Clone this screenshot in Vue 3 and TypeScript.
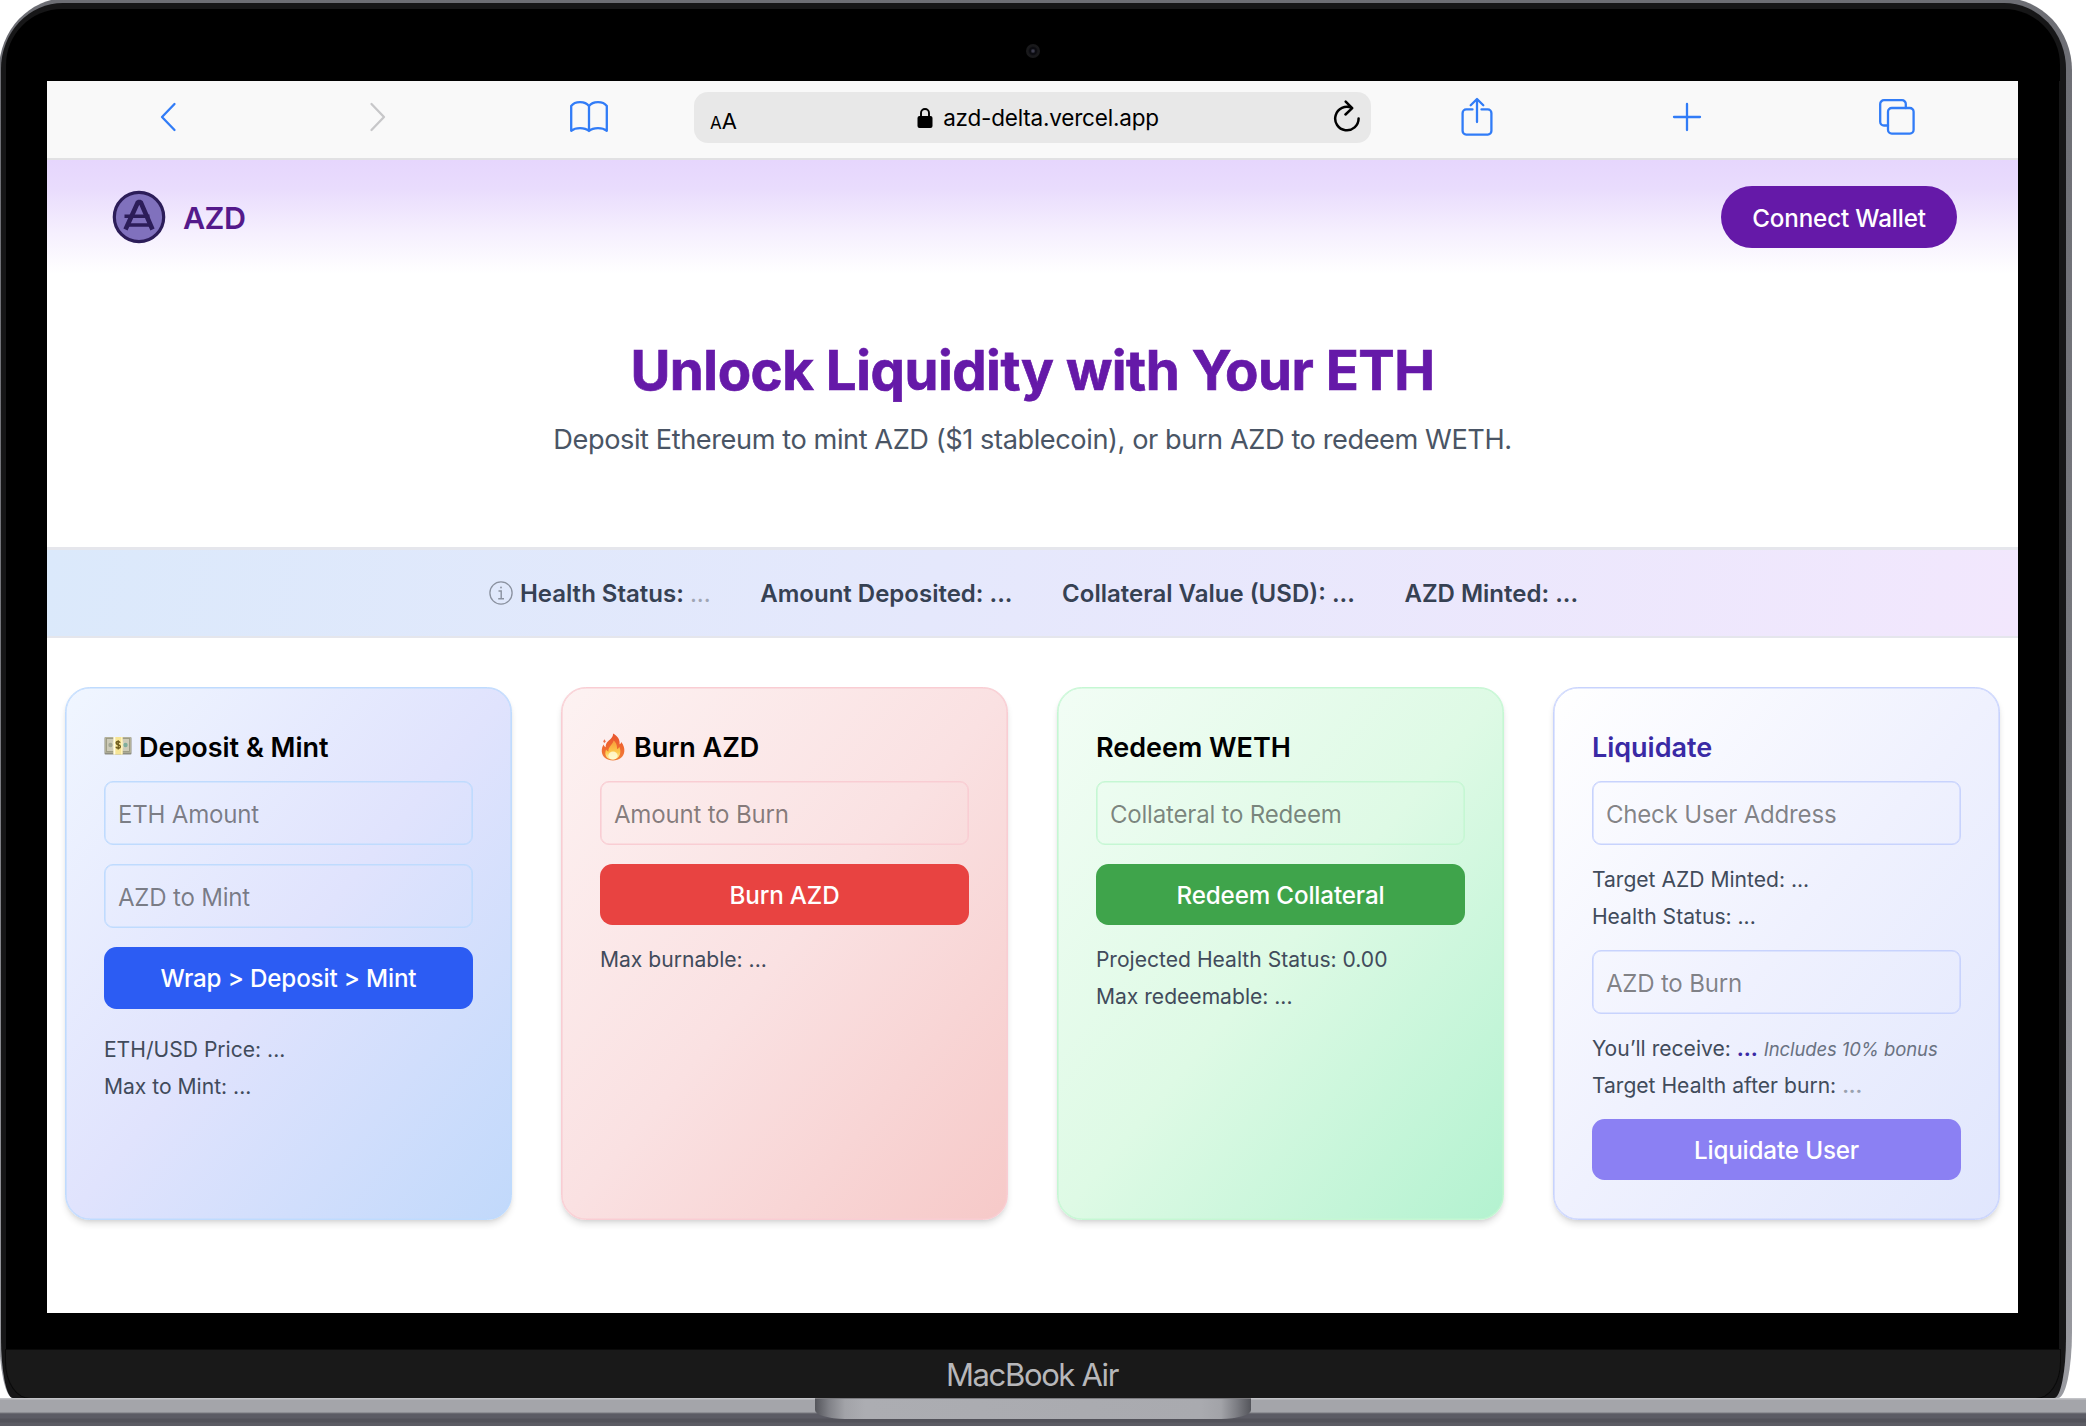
<script setup lang="ts">
interface Stat {
  label: string
  info?: boolean
  muted?: boolean
}

const stats: Stat[] = [
  { label: 'Health Status:', info: true, muted: true },
  { label: 'Amount Deposited:' },
  { label: 'Collateral Value (USD):' },
  { label: 'AZD Minted:' },
]
</script>

<template>
  <div class="stage">
    <div class="lid">
      <div class="glass">
        <div class="bezel-top">
          <span class="camera"></span>
        </div>

        <div class="screen">
          <nav class="toolbar">
            <div class="side side-left">
              <svg class="back" width="18" height="32" viewBox="0 0 18 32"><path d="M15.5 3 3 16l12.5 13" /></svg>
              <svg class="forward" width="18" height="32" viewBox="0 0 18 32"><path d="M2.500 3 15 16 2.500 29" /></svg>
              <svg class="book" width="40" height="34" viewBox="0 0 40 34">
                <path d="M20 6.200C18 3.400 14.800 2.200 11 2.200S4 3.600 2.200 6v24.800c2.300-1.900 5.300-2.700 8.800-2.700s6.900 1 9 2.900c2.100-1.900 5.500-2.900 9-2.900s6.500.8 8.800 2.700V6C36 3.600 32.800 2.200 29 2.200S22 3.400 20 6.200ZM20 6.200V31" />
              </svg>
            </div>
            <div class="address">
              <span class="reader"><small>A</small>A</span>
              <span class="url">
                <svg width="16" height="21" viewBox="0 0 16 21">
                  <path d="M4 10V6a4 4 0 0 1 8 0v4" fill="none" stroke="#000" stroke-width="1.900" />
                  <rect x=".5" y="9" width="15" height="12" rx="2" fill="#000" />
                </svg>
                <span>azd-delta.vercel.app</span>
              </span>
              <svg class="reload" width="28" height="33" viewBox="0 0 28 33">
                <path d="M25.600 18.500A11.700 11.700 0 1 1 18.700 7.900M12.700 1.600l6.500 6.500-6.700 6.400" />
              </svg>
            </div>
            <div class="side side-right">
              <svg width="32" height="40" viewBox="0 0 32 40">
                <path d="M11.500 12.400H5.200a3.600 3.600 0 0 0-3.600 3.600v18a3.600 3.600 0 0 0 3.600 3.600h21.600a3.600 3.600 0 0 0 3.600-3.600V16a3.600 3.600 0 0 0-3.600-3.600h-6.300M16 25V2.300M9.700 8.300 16 2l6.300 6.300" />
              </svg>
              <svg class="plus" width="32" height="32" viewBox="0 0 32 32"><path d="M16 3v26M3 16h26" /></svg>
              <svg width="38" height="38" viewBox="0 0 38 38">
                <path d="M10 27.500H6a3.800 3.800 0 0 1-3.800-3.800V6A3.800 3.800 0 0 1 6 2.200h18A3.800 3.800 0 0 1 27.800 6v4" />
                <rect x="10" y="10" width="25.600" height="25.600" rx="3.800" />
              </svg>
            </div>
          </nav>

          <header class="site-header">
            <div class="brand">
              <svg width="54" height="54" viewBox="0 0 54 54">
                <circle cx="27" cy="27" r="24.700" fill="#8071bd" stroke="#2c1d59" stroke-width="3.200" />
                <path d="M13.500 39.500 26 12h2.600L40.500 39.500" fill="none" stroke="#2c1d59" stroke-width="4.600" stroke-linejoin="bevel" />
                <path d="M12.500 26.300H37.500M16 35H39" stroke="#2c1d59" stroke-width="3.600" />
              </svg>
              <span>AZD</span>
            </div>
            <button class="connect">Connect Wallet</button>
          </header>

          <section class="hero">
            <h1>Unlock Liquidity with Your ETH</h1>
            <p>Deposit Ethereum to mint AZD ($1 stablecoin), or burn AZD to redeem WETH.</p>
          </section>

          <section class="stats">
            <div v-for="stat in stats" :key="stat.label" class="stat">
              <svg v-if="stat.info" width="24" height="24" viewBox="0 0 24 24" fill="none" stroke="#8a919f">
                <circle cx="12" cy="12" r="11.100" stroke-width="1.300" />
                <path d="M9.500 10h2.700v7.500M9.200 17.700h5.800" stroke-width="1.400" />
                <circle cx="12" cy="6.500" r=".9" fill="#8a919f" stroke="none" />
              </svg>
              <span>{{ stat.label }} <span :class="{ muted: stat.muted }">...</span></span>
            </div>
          </section>

          <main class="cards">
            <article class="card blue">
              <h2>
                <svg class="money" width="28" height="20" viewBox="0 0 28 20">
                  <rect x=".5" y="1" width="27" height="17.500" rx="1" fill="#8f8f82" />
                  <rect x="1" y="1" width="26" height="15.800" fill="#b4b29b" />
                  <rect x="2.500" y="2.500" width="23" height="13" fill="#cdcbb8" stroke="#96957f" stroke-width=".8" />
                  <circle cx="14" cy="9" r="6" fill="#dfdecb" />
                  <circle cx="6.500" cy="9" r="2.200" fill="#a3a896" />
                  <circle cx="21.500" cy="9" r="2.200" fill="#7fae9c" />
                  <rect x="9.500" y="1" width="9" height="17.500" fill="#f6e596" />
                  <rect x="9.500" y="1" width="1.800" height="17.500" fill="#fffbe6" />
                  <rect x="17" y="1" width="1.500" height="17.500" fill="#fff3bd" />
                  <path d="M16.200 6.700c-.4-.9-1.200-1.200-2.100-1.200-1.200 0-2 .6-2 1.600 0 2.300 4.300 1 4.300 3.400 0 1.100-.9 1.700-2.200 1.700-1.100 0-2-.5-2.300-1.400M14.200 4.200v9.400" fill="none" stroke="#6d5a1c" stroke-width="1.300" />
                </svg>
                <span>Deposit &amp; Mint</span>
              </h2>
              <input placeholder="ETH Amount" />
              <input placeholder="AZD to Mint" />
              <button>Wrap &gt; Deposit &gt; Mint</button>
              <div class="notes spaced">
                <p>ETH/USD Price: ...</p>
                <p>Max to Mint: ...</p>
              </div>
            </article>

            <article class="card red">
              <h2>
                <svg class="fire" width="24" height="28" viewBox="0 0 24 28">
                  <defs>
                    <linearGradient id="flame" x1="0" y1="0" x2="0" y2="1">
                      <stop offset="0" stop-color="#e8552f" />
                      <stop offset=".55" stop-color="#f0692f" />
                      <stop offset="1" stop-color="#f0803a" />
                    </linearGradient>
                    <linearGradient id="ember" x1="0" y1="0" x2="0" y2="1">
                      <stop offset="0" stop-color="#f89a3c" />
                      <stop offset=".6" stop-color="#fdc84a" />
                      <stop offset="1" stop-color="#fff3a8" />
                    </linearGradient>
                  </defs>
                  <path d="M12 .5c5 2.800 7.200 6.500 6.600 10.700.8-.3 1.400-1.200 1.700-2.300 2.300 3 3.400 6.200 3 9.600C22.700 24 18.400 27.500 12 27.500S1.200 24 .8 18.800c-.2-3.200.7-5.300 1.800-7.200.4 1.500 1.100 2.300 2.100 2.600C4.600 9.800 7 8.200 9.800 5.700 11.400 4.200 12.200 2.600 12 .5Z" fill="url(#flame)" />
                  <path d="M3.400 6.200 4.800 8.500 3.300 10 2.200 8.600Z" fill="#ec6d48" />
                  <path d="M12.600 7.500c3.500 2.800 3.300 6.300 3.500 8.500 1-.3 1.800-1.100 2.200-2.200 2.300 4.700 1.200 12.500-6.300 12.700-7.500-.2-8.800-5.600-6.900-10 .6 1.200 1.400 1.800 2.400 1.900-.6-4.700 3.900-6.100 5.100-10.900Z" fill="url(#ember)" />
                  <ellipse cx="12" cy="22.500" rx="4.600" ry="4" fill="#fffbd6" opacity=".85" />
                </svg>
                <span>Burn AZD</span>
              </h2>
              <input placeholder="Amount to Burn" />
              <button>Burn AZD</button>
              <div class="notes">
                <p>Max burnable: ...</p>
              </div>
            </article>

            <article class="card green">
              <h2><span>Redeem WETH</span></h2>
              <input placeholder="Collateral to Redeem" />
              <button>Redeem Collateral</button>
              <div class="notes">
                <p>Projected Health Status: 0.00</p>
                <p>Max redeemable: ...</p>
              </div>
            </article>

            <article class="card indigo">
              <h2><span>Liquidate</span></h2>
              <input placeholder="Check User Address" />
              <div class="notes">
                <p>Target AZD Minted: ...</p>
                <p>Health Status: ...</p>
              </div>
              <input placeholder="AZD to Burn" />
              <div class="notes">
                <p>You’ll receive: <b class="gain">...</b> <em>Includes 10% bonus</em></p>
                <p>Target Health after burn: <b class="faint">...</b></p>
              </div>
              <button>Liquidate User</button>
            </article>
          </main>
        </div>

        <div class="chin">MacBook Air</div>
      </div>
    </div>
    <div class="base">
      <div class="notch"></div>
    </div>
  </div>
</template>

<style>
body {
  margin: 0;
  background: #fff;
  overflow: hidden;
}
</style>

<style scoped>
* {
  box-sizing: border-box;
}

.stage {
  width: 2086px;
  height: 1426px;
  overflow: hidden;
  display: flex;
  flex-direction: column;
  font-family: Inter, "Liberation Sans", sans-serif;
  font-size: 24.8px;
  line-height: 37.2px;
  color: #000;
}

h1, h2, p {
  margin: 0;
}

svg {
  display: block;
  flex: none;
}

/* Laptop shell */
.lid {
  width: 2073px;
  height: 1400px;
  margin: -2px 0 0 -1px;
  padding: 5px 6px 0 2px;
  flex: none;
  background: linear-gradient(#6d6e74, #77787e 50%, #9a9ba1);
  border-radius: 68px 68px 14px 14px / 72px 72px 66px 66px;
}

.glass {
  height: 100%;
  padding: 0 6px 0 5px;
  border-radius: 62px 62px 12px 12px / 66px 66px 60px 60px;
  background: #161617;
}

.glass::before {
  content: "";
  display: block;
  height: 6px;
}

.bezel-top {
  height: 72px;
  display: flex;
  justify-content: center;
  align-items: center;
  background: #000;
  border-radius: 56px 56px 0 0;
}

.camera {
  width: 14px;
  height: 14px;
  margin-top: 11px;
  border-radius: 50%;
  background: radial-gradient(circle, #3c3c4c 0 1px, #0b0b10 2.500px 3.500px, #19191b 5px);
}

.screen {
  width: 2053px;
  height: 1269px;
  border: solid #000;
  border-width: 0 41px 37px 41px;
  background: #fff;
  display: flex;
  flex-direction: column;
}

.chin {
  height: 48px;
  padding: 2px 2px 0 0;
  display: flex;
  align-items: center;
  justify-content: center;
  background: #191919;
  border-radius: 0 0 24px 24px / 0 0 36px 36px;
  box-shadow: 0 0 0 1px #0a0a0a;
  color: #b7b7ba;
  font-size: 31px;
  letter-spacing: -1.35px;
}

.base {
  height: 28px;
  flex: none;
  display: flex;
  justify-content: center;
  padding-right: 20px;
  background: linear-gradient(#c2c3c7 0 1px, #a4a5aa 2px 14px, #77787e 15px, #5b5b64 16px 20px, #52525a 21px 24px, #5b5b63 25px);
}

.notch {
  width: 436px;
  height: 21px;
  border-radius: 0 0 30px 30px / 0 0 9px 9px;
  background: linear-gradient(90deg, #54555b, #808187 14px, #a2a3a8 30px, #acadb2 50px, #a9aaaf 386px, #a2a3a8 406px, #7b7c82 422px, #54555b);
  box-shadow: inset 0 1px #7c7c80;
}

/* Browser toolbar */
.toolbar {
  height: 79px;
  flex: none;
  display: flex;
  align-items: center;
  padding-bottom: 6px;
  background: #f9f9f9;
  border-bottom: 2px solid #e1e1e3;
}

.side {
  display: flex;
  align-items: center;
}

.side svg {
  fill: none;
  stroke: #317cf7;
  stroke-width: 2.3;
  stroke-linecap: round;
  stroke-linejoin: round;
}

.side svg.forward {
  stroke: #c7c7c9;
}

.side-left {
  width: 647px;
  padding-left: 112px;
}

.back { margin-right: 192px; }
.forward { margin-right: 182px; }

.address {
  width: 677px;
  height: 51px;
  margin-top: 2px;
  padding: 0 10px 0 16px;
  display: flex;
  align-items: center;
  justify-content: space-between;
  background: #e8e8e8;
  border-radius: 14px;
}

.reader {
  width: 42px;
  font-size: 22px;
  line-height: 30px;
  padding-top: 9px;
}

.reader small {
  font-size: 17px;
}

.url {
  display: flex;
  align-items: center;
  gap: 10px;
  padding: 0 9px 0 0;
  font-size: 22.5px;
  letter-spacing: -0.2px;
}

.reload {
  fill: none;
  stroke: #000;
  stroke-width: 2.5;
  stroke-linecap: round;
  stroke-linejoin: round;
  margin-bottom: 3px;
}

.side-right {
  flex: 1;
  justify-content: space-between;
  padding: 0 102px 0 90px;
}

.plus {
  margin-left: 2px;
}

/* Page */
.site-header {
  height: 114px;
  flex: none;
  display: flex;
  align-items: center;
  justify-content: space-between;
  padding: 0 61px 0 65px;
  background: linear-gradient(#e6d6fd, #e9dcfd 25%, #f6f0fe 65%, #fff);
}

.brand {
  display: flex;
  align-items: center;
  gap: 17px;
  font-size: 30.5px;
  font-weight: 600;
  letter-spacing: -0.6px;
  color: #54198b;
}

.brand span {
  padding-top: 2px;
}

.connect {
  width: 236px;
  height: 62px;
  padding: 2px 0 0;
  border: 0;
  border-radius: 31px;
  background: #6519a8;
  color: #fff;
  font: 500 24.2px Inter, sans-serif;
  letter-spacing: -0.15px;
}

.hero {
  height: 273px;
  flex: none;
  padding-top: 65px;
  text-align: center;
}

.hero h1 {
  font-size: 54.6px;
  line-height: 62px;
  font-weight: 750;
  letter-spacing: -0.5px;
  -webkit-text-stroke: 0.7px #6519a8;
  color: #6519a8;
}

.hero p {
  margin-top: 17.4px;
  font-size: 27.2px;
  line-height: 43.4px;
  letter-spacing: -0.43px;
  color: #4a5565;
}

.stats {
  height: 91px;
  padding: 1px 0 0 2px;
  flex: none;
  display: flex;
  align-items: center;
  justify-content: center;
  gap: 49.6px;
  background: linear-gradient(100deg, #dbe9fb, #e5e8fc 45%, #f2e7fd);
  border: solid #e5e6ec;
  border-width: 3px 0 2px;
  font-size: 24px;
  font-weight: 600;
  color: #364153;
}

.stat {
  display: flex;
  align-items: center;
  gap: 7px;
  white-space: nowrap;
}

.muted {
  color: #a0a6b4;
  font-weight: 400;
}

.cards {
  display: grid;
  grid-template-columns: repeat(4, 446.4px);
  justify-content: center;
  gap: 49.6px;
  padding-top: 49px;
}

.card {
  height: 533px;
  padding: 37.2px 37.6px;
  border: 1px solid var(--line);
  border-radius: 24.8px;
  box-shadow: inset 0 0 0 0.6px var(--line), 0 5px 7px -1px rgba(0, 0, 0, 0.12), 0 2px 4px -2px rgba(0, 0, 0, 0.12);
}

.blue {
  --line: #bfdbfe;
  --fill: #2c5cf3;
  background: linear-gradient(to bottom right, #f0f6ff, #e0e3fd 50%, #c1d9fb);
}

.red {
  --line: #f9cdd3;
  --fill: #e84341;
  background: linear-gradient(to bottom right, #fdf2f2, #fae1e2 50%, #f6c9c8);
}

.green {
  --line: #c5f7d3;
  --fill: #3fa44b;
  background: linear-gradient(to bottom right, #f2fdf5, #defae5 50%, #b3f2d0);
}

.indigo {
  --line: #c8d3fd;
  --fill: #8b80f3;
  background: linear-gradient(to bottom right, #fff, #eff1fe 50%, #e0e6fd);
}

.card h2 {
  display: flex;
  align-items: center;
  height: 43.4px;
  padding-top: 2px;
  margin-bottom: 12.4px;
  font-size: 27px;
  font-weight: 600;
  letter-spacing: 0;
  white-space: nowrap;
}

.indigo h2 {
  color: #3a2aa5;
}

.money {
  margin: 0 7px 4px 0;
}

.fire {
  margin: 0 9px 2px 1px;
}

.card input {
  display: block;
  width: 100%;
  height: 64px;
  margin: 0 0 18.6px;
  padding: 3px 13px 0;
  border: 1px solid var(--line);
  border-radius: 9px;
  box-shadow: inset 0 0 0 0.6px var(--line);
  background: transparent;
  font: 400 24.1px Inter, sans-serif;
  letter-spacing: -0.22px;
}

.blue input {
  margin-bottom: 19px;
}

.card input::placeholder {
  color: rgba(0, 0, 0, 0.48);
  opacity: 1;
}

.card button {
  display: block;
  width: 100%;
  height: 61.6px;
  padding: 2px 0 0;
  border: 0;
  border-radius: 12.4px;
  background: var(--fill);
  color: #fff;
  font: 500 24.2px Inter, sans-serif;
  letter-spacing: -0.15px;
}

.indigo button {
  margin-top: -0.2px;
}

.notes {
  margin: 18.6px 0;
  display: flex;
  flex-direction: column;
  gap: 6.2px;
  font-size: 21.1px;
  line-height: 31px;
  color: #414b5b;
  white-space: nowrap;
}

.indigo .notes {
  margin-bottom: 18.2px;
}

.notes p {
  height: 31px;
  padding-top: 0.5px;
}

.spaced {
  margin-top: 24.8px;
}

.gain {
  color: #3a2aa5;
}

.faint {
  color: #99a1af;
  font-weight: 600;
}

.notes em {
  font-size: 18.5px;
  letter-spacing: -0.1px;
  color: #6a7282;
}
</style>
